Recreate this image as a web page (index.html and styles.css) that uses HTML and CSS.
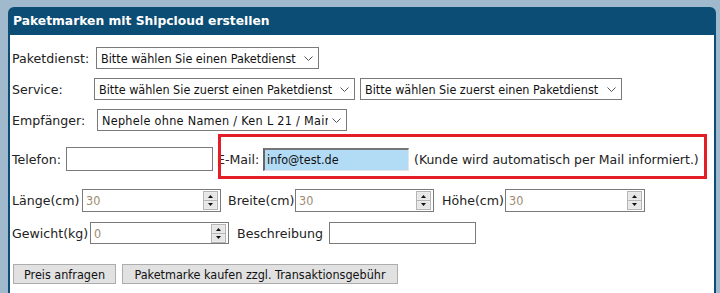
FILE: index.html
```html
<!DOCTYPE html>
<html lang="de">
<head>
<meta charset="utf-8">
<link rel="stylesheet" href="styles.css">
</head>
<body>
<div class="panel">
  <div class="head">Paketmarken mit Shipcloud erstellen</div>
  <div class="content">
    <div class="row r1">
      <span class="lbl l-paket">Paketdienst:</span>
      <span class="sel s-paket"><span class="sel-text">Bitte wählen Sie einen Paketdienst</span><svg class="chev" width="9" height="5" viewBox="0 0 9 5"><path d="M0.5 0.5 L4.5 4.5 L8.5 0.5" fill="none" stroke="#555" stroke-width="1"/></svg></span>
    </div>
    <div class="row r2">
      <span class="lbl l-service">Service:</span>
      <span class="sel s-service"><span class="sel-text">Bitte wählen Sie zuerst einen Paketdienst</span><svg class="chev" width="9" height="5" viewBox="0 0 9 5"><path d="M0.5 0.5 L4.5 4.5 L8.5 0.5" fill="none" stroke="#555" stroke-width="1"/></svg></span>
      <span class="sel s-service2"><span class="sel-text">Bitte wählen Sie zuerst einen Paketdienst</span><svg class="chev" width="9" height="5" viewBox="0 0 9 5"><path d="M0.5 0.5 L4.5 4.5 L8.5 0.5" fill="none" stroke="#555" stroke-width="1"/></svg></span>
    </div>
    <div class="row r3">
      <span class="lbl l-empf">Empfänger:</span>
      <span class="sel s-empf"><span class="sel-text">Nephele ohne Namen / Ken L 21 / Mainz</span><svg class="chev" width="9" height="5" viewBox="0 0 9 5"><path d="M0.5 0.5 L4.5 4.5 L8.5 0.5" fill="none" stroke="#555" stroke-width="1"/></svg></span>
    </div>
    <div class="row r4">
      <span class="lbl l-tel">Telefon:</span>
      <span class="inp i-tel"></span>
      <span class="lbl l-mail">E-Mail:</span>
      <span class="inp i-mail">info@test.de</span>
      <span class="note">(Kunde wird automatisch per Mail informiert.)</span>
    </div>
    <div class="row r5">
      <span class="lbl l-laenge">Länge(cm)</span>
      <span class="num n-laenge"><span class="num-val">30</span><span class="spin"><svg width="15" height="19" viewBox="0 0 15 19"><rect x="0.5" y="0.5" width="14" height="18" fill="#f0f0f0" stroke="#b4b4b4"/><rect x="1.5" y="1.5" width="12" height="7" fill="#e6e6e6"/><rect x="1.5" y="10.5" width="12" height="7" fill="#e6e6e6"/><line x1="1" y1="9.5" x2="14" y2="9.5" stroke="#b4b4b4"/><path d="M5 7 L10 7 L7.5 4 Z" fill="#111"/><path d="M5 12 L10 12 L7.5 15 Z" fill="#111"/></svg></span></span>
      <span class="lbl l-breite">Breite(cm)</span>
      <span class="num n-breite"><span class="num-val">30</span><span class="spin"><svg width="15" height="19" viewBox="0 0 15 19"><rect x="0.5" y="0.5" width="14" height="18" fill="#f0f0f0" stroke="#b4b4b4"/><rect x="1.5" y="1.5" width="12" height="7" fill="#e6e6e6"/><rect x="1.5" y="10.5" width="12" height="7" fill="#e6e6e6"/><line x1="1" y1="9.5" x2="14" y2="9.5" stroke="#b4b4b4"/><path d="M5 7 L10 7 L7.5 4 Z" fill="#111"/><path d="M5 12 L10 12 L7.5 15 Z" fill="#111"/></svg></span></span>
      <span class="lbl l-hoehe">Höhe(cm)</span>
      <span class="num n-hoehe"><span class="num-val">30</span><span class="spin"><svg width="15" height="19" viewBox="0 0 15 19"><rect x="0.5" y="0.5" width="14" height="18" fill="#f0f0f0" stroke="#b4b4b4"/><rect x="1.5" y="1.5" width="12" height="7" fill="#e6e6e6"/><rect x="1.5" y="10.5" width="12" height="7" fill="#e6e6e6"/><line x1="1" y1="9.5" x2="14" y2="9.5" stroke="#b4b4b4"/><path d="M5 7 L10 7 L7.5 4 Z" fill="#111"/><path d="M5 12 L10 12 L7.5 15 Z" fill="#111"/></svg></span></span>
    </div>
    <div class="row r6">
      <span class="lbl l-gew">Gewicht(kg)</span>
      <span class="num n-gew"><span class="num-val">0</span><span class="spin"><svg width="15" height="19" viewBox="0 0 15 19"><rect x="0.5" y="0.5" width="14" height="18" fill="#f0f0f0" stroke="#b4b4b4"/><rect x="1.5" y="1.5" width="12" height="7" fill="#e6e6e6"/><rect x="1.5" y="10.5" width="12" height="7" fill="#e6e6e6"/><line x1="1" y1="9.5" x2="14" y2="9.5" stroke="#b4b4b4"/><path d="M5 7 L10 7 L7.5 4 Z" fill="#111"/><path d="M5 12 L10 12 L7.5 15 Z" fill="#111"/></svg></span></span>
      <span class="lbl l-besch">Beschreibung</span>
      <span class="inp i-besch"></span>
    </div>
    <div class="row r7">
      <span class="btn b-preis">Preis anfragen</span>
      <span class="btn b-kaufen">Paketmarke kaufen zzgl. Transaktionsgebühr</span>
    </div>
  </div>
</div>
<div class="mark"></div>
</body>
</html>
```

FILE: styles.css
```css
html, body {
  margin: 0;
  padding: 0;
}
body {
  background: #a0b9cc;
  width: 720px;
  height: 293px;
  overflow: hidden;
  position: relative;
  font-family: "DejaVu Sans", Verdana, sans-serif;
  font-size: 12.6px;
  color: #222;
}
.panel {
  margin: 7px 0 0 8px;
  width: 708px;
  height: 286px;
  background: #0b4d74;
  border-radius: 6px 6px 0 0;
  display: flex;
  flex-direction: column;
}
.head {
  height: 28px;
  line-height: 28px;
  padding-left: 5px;
  color: #fff;
  font-weight: bold;
  font-size: 12.3px;
}
.content {
  flex: 1;
  background: #fff;
  margin: 0 2px;
  padding: 12px 0 0 2px;
  display: flex;
  flex-direction: column;
}
.row {
  display: flex;
  align-items: center;
}
.r1 { height: 22px; }
.r2 { height: 22px; margin-top: 9px; }
.r3 { height: 22px; margin-top: 9px; }
.r4 { height: 24px; margin-top: 16px; }
.r5 { height: 23px; margin-top: 18px; }
.r6 { height: 22px; margin-top: 10px; }
.r7 { height: 20px; margin-top: 20px; }

.lbl { flex: none; white-space: nowrap; }
.l-paket { width: 84px; }
.l-service { width: 82px; }
.l-empf { width: 85px; }
.l-tel { width: 54px; }
.l-mail { width: 46px; margin-left: 4px; }
.l-laenge { width: 70px; }
.l-breite { width: 67px; margin-left: 7px; }
.l-hoehe { width: 63px; margin-left: 8px; }
.l-gew { width: 78px; }
.l-besch { width: 92px; margin-left: 8px; }

.sel {
  flex: none;
  box-sizing: border-box;
  height: 22px;
  border: 1px solid #7a7a7a;
  background: #fff;
  display: flex;
  align-items: center;
  padding: 0 5px 0 4px;
  overflow: hidden;
  color: #111;
  font-family: "DejaVu Sans Condensed", "DejaVu Sans", sans-serif;
  font-size: 12.5px;
}
.sel-text {
  flex: 1;
  white-space: nowrap;
  overflow: hidden;
}
.chev { flex: none; margin-left: 4px; }
.s-paket { width: 223px; }
.s-service { width: 261px; }
.s-service2 { width: 262px; margin-left: 5px; }
.s-empf { width: 250px; letter-spacing: 0.3px; }

.inp {
  flex: none;
  box-sizing: border-box;
  height: 24px;
  border: 1px solid #7a7a7a;
  background: #fff;
}
.i-tel { width: 147px; }
.i-mail {
  width: 146px;
  height: 23px;
  background: #b2dcf5;
  border-top: 2px solid #777;
  border-left: 2px solid #666;
  border-right: 1px solid #e4e4e4;
  border-bottom: 1px solid #e4e4e4;
  padding-left: 2px;
  line-height: 20px;
  color: #111;
  font-family: "DejaVu Sans Condensed", "DejaVu Sans", sans-serif;
  font-size: 12.5px;
}
.i-besch { width: 147px; height: 22px; }
.note { margin-left: 5px; white-space: nowrap; font-size: 12.5px; }

.num {
  flex: none;
  box-sizing: border-box;
  height: 23px;
  border: 1px solid #7a7a7a;
  background: #fff;
  display: flex;
  align-items: center;
  padding: 0 2px 0 3px;
  font-family: "DejaVu Sans Condensed", "DejaVu Sans", sans-serif;
  font-size: 12.5px;
}
.num-val { flex: 1; color: #a08a72; }
.spin { display: flex; }
.n-laenge { width: 139px; }
.n-breite { width: 139px; }
.n-hoehe { width: 140px; }
.n-gew { width: 139px; height: 22px; }

.btn {
  flex: none;
  box-sizing: border-box;
  height: 20px;
  border: 1px solid #adadad;
  background: #e1e1e1;
  display: flex;
  align-items: center;
  justify-content: center;
  color: #111;
  white-space: nowrap;
  font-family: "DejaVu Sans Condensed", "DejaVu Sans", sans-serif;
  font-size: 12.5px;
}
.b-preis { width: 103px; margin-left: 1px; }
.b-kaufen { width: 276px; margin-left: 6px; }

.mark {
  position: absolute;
  left: 218px;
  top: 134px;
  width: 489px;
  height: 45px;
  box-sizing: border-box;
  border: 3px solid #e41e26;
}
```
